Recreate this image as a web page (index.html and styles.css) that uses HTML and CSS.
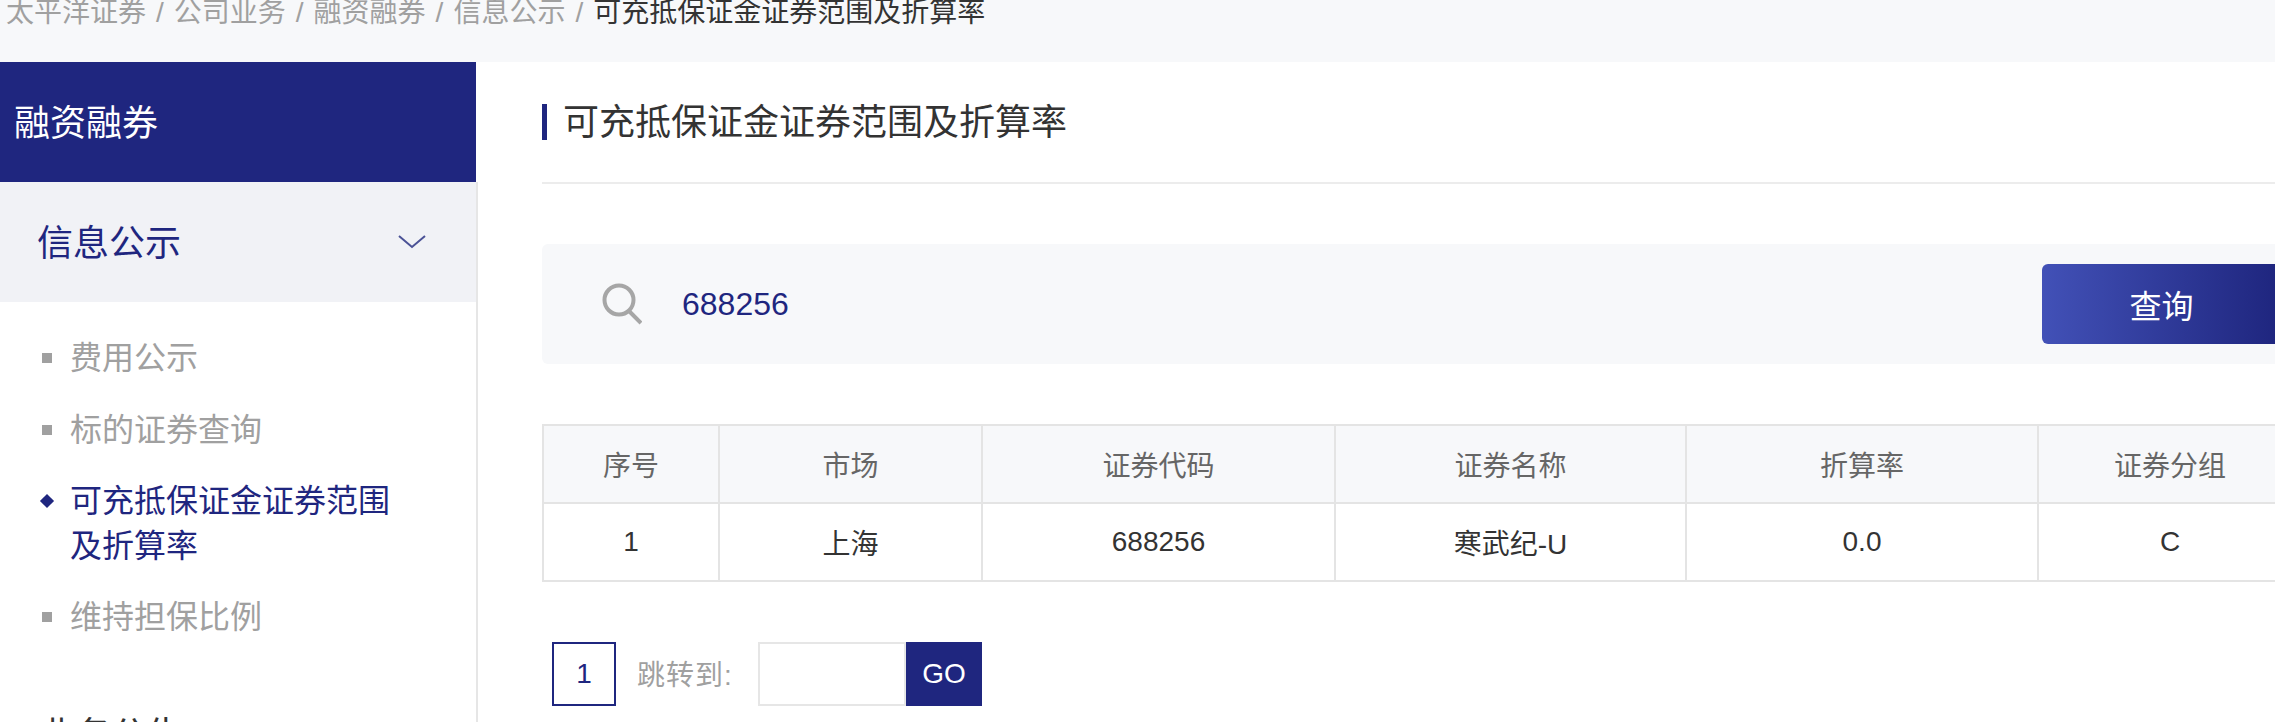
FILE: index.html
```html
<!DOCTYPE html>
<html lang="zh-CN">
<head>
<meta charset="utf-8">
<title>可充抵保证金证券范围及折算率</title>
<link rel="stylesheet" href="styles.css">
</head>
<body>
<div class="page">
  <nav class="crumbs">
    <a>太平洋证券</a><span class="sep">/</span><a>公司业务</a><span class="sep">/</span><a>融资融券</a><span class="sep">/</span><a>信息公示</a><span class="sep">/</span><span class="current">可充抵保证金证券范围及折算率</span>
  </nav>
  <div class="main">
    <aside class="side">
      <div class="side-title">融资融券</div>
      <div class="side-body">
        <div class="group-head">
          <span class="group-label">信息公示</span>
          <svg class="chev" width="28" height="14" viewBox="0 0 28 14"><path d="M1 1 L14 12 L27 1" fill="none" stroke="#4b5296" stroke-width="2"/></svg>
        </div>
        <ul class="menu">
          <li class="item">费用公示</li>
          <li class="item">标的证券查询</li>
          <li class="item active">可充抵保证金证券范围及折算率</li>
          <li class="item">维持担保比例</li>
        </ul>
        <div class="group-next">业务公告</div>
      </div>
    </aside>
    <section class="content">
      <h1 class="title">可充抵保证金证券范围及折算率</h1>
      <div class="search">
        <svg class="search-icon" width="40" height="42" viewBox="0 0 40 42"><circle cx="17" cy="17" r="14.5" fill="none" stroke="#a6a6a6" stroke-width="4"/><path d="M27 28 L39 40" stroke="#a6a6a6" stroke-width="4" fill="none"/></svg>
        <span class="query">688256</span>
        <button class="btn">查询</button>
      </div>
      <div class="table-wrap">
        <table class="grid">
          <colgroup><col class="c1"><col class="c2"><col class="c3"><col class="c4"><col class="c5"><col class="c6"></colgroup>
          <thead><tr><th>序号</th><th>市场</th><th>证券代码</th><th>证券名称</th><th>折算率</th><th>证券分组</th></tr></thead>
          <tbody><tr><td>1</td><td>上海</td><td>688256</td><td>寒武纪-U</td><td>0.0</td><td>C</td></tr></tbody>
        </table>
      </div>
      <div class="pager">
        <span class="page-no">1</span>
        <span class="jump">跳转到:</span>
        <span class="jump-input"></span>
        <span class="go">GO</span>
      </div>
    </section>
  </div>
</div>
</body>
</html>
```
FILE: styles.css
```css
* { box-sizing: border-box; }
html, body { margin: 0; padding: 0; background: #fff; overflow: hidden; }
body { font-family: "Liberation Sans", "Noto Sans CJK SC", sans-serif; color: #333; }
.page { width: 2275px; height: 722px; overflow: hidden; }

.crumbs { height: 62px; background: #f7f8fa; padding-left: 6px; font-size: 28px; line-height: 26px; color: #a0a0a0; white-space: nowrap; }
.sep { margin: 0 10px; }
.current { color: #333; }

.main { display: flex; height: 660px; }
.side { width: 479px; flex: none; }
.side-title { height: 120px; width: 476px; background: #1f267f; color: #fff; font-size: 36px; line-height: 124px; padding-left: 14px; }
.side-body { width: 478px; height: 540px; border-right: 2px solid #e6e6e6; overflow: hidden; }
.group-head { height: 120px; background: #f1f2f6; color: #1f267f; font-size: 36px; padding: 0 50px 0 37px; display: flex; align-items: center; justify-content: space-between; }
.group-label { margin-top: -5px; }
.chev { margin-top: 0; }
.menu { list-style: none; margin: 0; padding: 34px 60px 0 70px; height: 374px; }
.item { position: relative; font-size: 32px; line-height: 45px; color: #a0a0a0; margin-bottom: 26px; }
.item + .item { top: 1px; }
.item::before { content: ""; position: absolute; left: -28px; top: 17px; width: 10px; height: 10px; background: #a0a0a0; }
.item.active { color: #1f267f; }
.item.active::before { background: #1f267f; transform: rotate(45deg); }
.group-next { font-size: 36px; line-height: 120px; height: 120px; padding-left: 39px; color: #333; }

.content { flex: 1; min-width: 0; padding-left: 63px; }
.title { margin: 0; height: 122px; border-bottom: 2px solid #ececec; font-size: 36px; font-weight: 400; color: #333; padding-top: 42px; line-height: 38px; }
.title::before { content: ""; display: inline-block; width: 5px; height: 36px; background: #1f267f; margin-right: 16px; vertical-align: top; }
.search { margin-top: 60px; height: 120px; background: #f7f8fa; border-radius: 6px 0 0 6px; display: flex; align-items: center; padding-left: 60px; }
.search-icon { flex: none; margin-right: 40px; }
.query { font-size: 32px; color: #1f267f; }
.btn { margin-left: auto; width: 233px; height: 80px; border: 0; border-radius: 6px 0 0 6px; padding: 0 0 0 6px; color: #fff; font: inherit; font-size: 32px; background: linear-gradient(90deg, #4251b7, #1f267f); }

.table-wrap { margin-top: 60px; overflow: hidden; height: 158px; }
.grid { width: 1759px; table-layout: fixed; border-collapse: collapse; font-size: 28px; text-align: center; border-top: 2px solid #e4e4e4; border-left: 2px solid #e4e4e4; }
.c1 { width: 176px; } .c2 { width: 263px; } .c3 { width: 353px; } .c4 { width: 351px; } .c5 { width: 352px; } .c6 { width: 264px; }
.grid th, .grid td { border: 2px solid #e4e4e4; padding: 0; }
.grid th { height: 78px; background: #f7f8fa; color: #666; font-weight: 400; }
.grid td { height: 78px; color: #333; }

.pager { margin-top: 60px; margin-left: 10px; display: flex; align-items: center; height: 64px; }
.page-no { width: 64px; height: 64px; border: 2px solid #1f267f; color: #1f267f; font-size: 28px; display: flex; align-items: center; justify-content: center; }
.jump { margin-left: 21px; margin-top: -2px; width: 121px; font-size: 28px; letter-spacing: 1px; color: #a0a0a0; }
.jump-input { width: 148px; height: 64px; border: 2px solid #e6e6e6; }
.go { width: 76px; height: 64px; background: #1f267f; color: #fff; font-size: 28px; display: flex; align-items: center; justify-content: center; }
```
